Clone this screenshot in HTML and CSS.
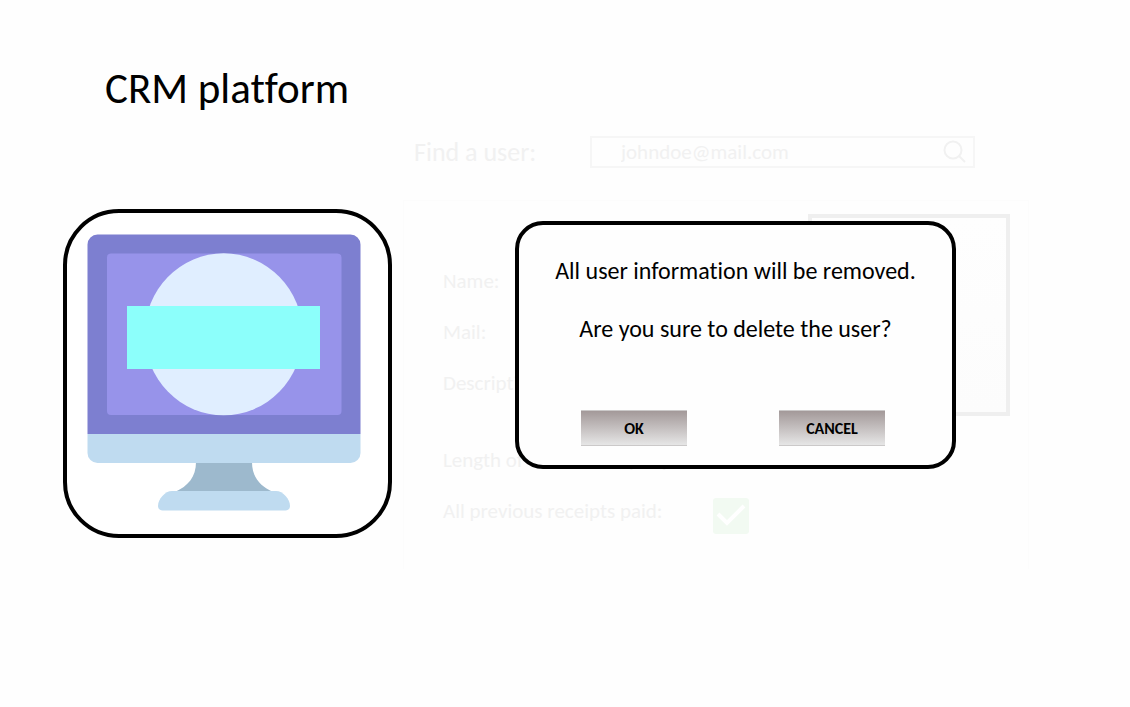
FILE: index.html
```html
<!DOCTYPE html>
<html lang="en">
<head>
<meta charset="utf-8">
<meta name="viewport" content="width=device-width, initial-scale=1">
<title>CRM platform</title>
<link rel="stylesheet" href="styles.css">
</head>
<body>
<main class="page">
  <h1 class="title">CRM platform</h1>

  <form class="search">
    <label class="search-label" for="q">Find a user:</label>
    <div class="search-box">
      <input class="search-input" id="q" type="text" value="johndoe@mail.com">
      <button class="search-button" type="button" aria-label="Search">
        <svg viewBox="0 0 24 24" width="24" height="24" fill="none" stroke="currentColor" stroke-width="2">
          <circle cx="10" cy="10" r="8.5"/>
          <path d="M16 16l6 6"/>
        </svg>
      </button>
    </div>
  </form>

  <div class="logo">
    <svg viewBox="0 0 321 321" role="img" aria-label="Monitor">
      <path fill="#9db9cd" d="M129 249h56c0 15 8 24 21 30h-98c13-6 21-15 21-30z"/>
      <path fill="#bfdbf0" d="M105 278h104c7 0 14 8 14 15 0 3-2 4.500-4.500 4.500h-123c-2.500 0-4.500-1.500-4.500-4.500 0-7 7-15 14-15z"/>
      <path fill="#7d7fd0" d="M20.500 221V31.500a10 10 0 0 1 10-10h253a10 10 0 0 1 10 10V221z"/>
      <path fill="#bfdbf0" d="M20.500 221h273v19a10 10 0 0 1-10 10h-253a10 10 0 0 1-10-10z"/>
      <rect fill="#9793ea" x="40" y="40.500" width="234.500" height="161.500" rx="4"/>
      <ellipse fill="#e0eeff" cx="156.700" cy="121.300" rx="79" ry="81"/>
      <rect fill="#8cfffb" x="60" y="93" width="193" height="63"/>
    </svg>
  </div>

  <section class="panel">
    <div class="details">
      <div class="fields">
        <p class="field">Name:</p>
        <p class="field">Mail:</p>
        <p class="field field-tall">Description:</p>
        <p class="field">Length of time in company:</p>
      </div>
      <div class="photo"></div>
    </div>
    <div class="paid">
      <label class="field" for="paid">All previous receipts paid:</label>
      <span class="check">
        <input class="check-input" id="paid" type="checkbox" checked>
        <svg class="check-mark" viewBox="0 0 36 36" fill="none" stroke="#fff" stroke-width="4">
          <path d="M5 16l9 9L31 8"/>
        </svg>
      </span>
    </div>

    <div class="dialog" role="dialog" aria-labelledby="dialog-text">
      <div id="dialog-text">
        <p class="message">All user information will be removed.</p>
        <p class="message">Are you sure to delete the user?</p>
      </div>
      <div class="actions">
        <button class="action" type="button">OK</button>
        <button class="action" type="button">CANCEL</button>
      </div>
    </div>
  </section>
</main>
</body>
</html>
```

FILE: styles.css
```css
* { box-sizing: border-box; }

body {
  margin: 0;
  background: #fefefe;
  color: #000;
  font-family: Carlito, Calibri, Lato, "Open Sans", sans-serif;
  font-variant-ligatures: none;
}

p, h1 { margin: 0; font-weight: 400; }

.page {
  display: grid;
  grid-template-columns: minmax(0, 329fr) minmax(0, 626fr);
  column-gap: 11px;
  padding: 65px 101px 40px 63px;
}

.title {
  grid-column: 1 / -1;
  padding-left: 42px;
  font-size: 43px;
  line-height: 48px;
}

.search {
  grid-column: 2;
  display: flex;
  align-items: center;
  justify-content: space-between;
  margin-top: 23px;
  padding: 0 54px 0 11px;
  color: #f1f1f1;
}

.search-label { font-size: 26px; line-height: 32px; }

.search-box {
  display: flex;
  align-items: center;
  flex: 0 1 385px;
  height: 32px;
  padding: 0 6px 0 29px;
  border: 2px solid #f6f6f6;
}

.search-input {
  flex: 1;
  min-width: 0;
  padding: 0;
  border: 0;
  background: none;
  color: inherit;
  font: inherit;
  font-size: 21px;
  line-height: 28px;
  outline: 0;
}

.search-button {
  display: flex;
  padding: 0;
  border: 0;
  background: none;
  color: inherit;
}

.logo {
  align-self: start;
  margin-top: 41px;
  border: 4px solid #000;
  border-radius: 56px;
  background: #fff;
}

.logo svg { display: block; width: 100%; }

.panel {
  position: relative;
  margin-top: 32px;
  padding: 13px 18px 35px 39px;
  border: 1px solid #fcfcfc;
  border-bottom: 0;
}

.details { display: flex; justify-content: space-between; }

.fields { padding-top: 53px; }

.field {
  color: #f1f1f1;
  font-size: 21px;
  line-height: 28px;
  white-space: nowrap;
}

.fields .field { margin-bottom: 23px; }
.fields .field-tall { margin-bottom: 49px; }

.photo {
  flex: none;
  width: 202px;
  height: 202px;
  border: 4px solid #efefef;
  background: linear-gradient(#fefefe, #fcfcfc);
}

.paid { display: flex; }

.paid .field { flex: 0 0 270px; }

.check { position: relative; width: 36px; height: 36px; margin-top: 1px; }

.check-input {
  appearance: none;
  display: block;
  width: 36px;
  height: 36px;
  margin: 0;
  border-radius: 3px;
  background: #f2faf2;
}

.check-mark {
  position: absolute;
  inset: 0;
  pointer-events: none;
}

.dialog {
  position: absolute;
  top: 20px;
  left: 111px;
  width: 441px;
  padding: 31px 32px 19px;
  border: 4px solid #000;
  border-radius: 28px;
  background: #fefefe;
}

.message {
  font-size: 24px;
  line-height: 29px;
  text-align: center;
}

.message + .message { margin-top: 29px; }

.actions {
  display: flex;
  justify-content: space-between;
  margin-top: 67px;
  padding: 0 35px 0 30px;
}

.action {
  width: 106px;
  height: 36px;
  padding: 0;
  border: solid #cbc9c9;
  border-width: 1px 0;
  background: linear-gradient(#a39999, #e6e6e6);
  color: #000;
  font: inherit;
  font-size: 16px;
  font-weight: 700;
}
```
